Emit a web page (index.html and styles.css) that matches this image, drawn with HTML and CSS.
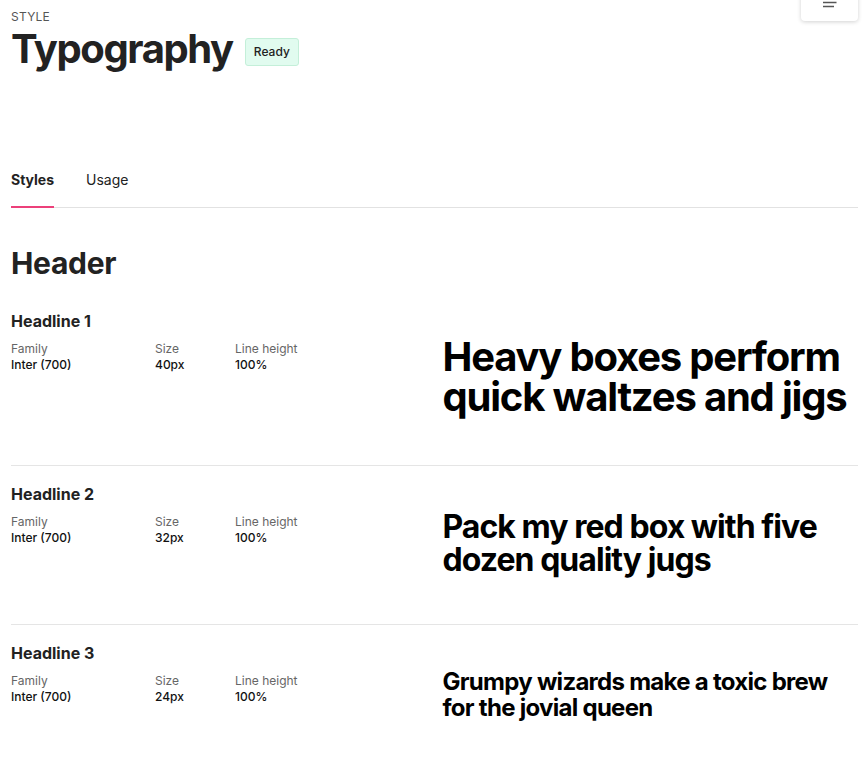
FILE: index.html
```html
<!DOCTYPE html>
<html lang="en">
<head>
  <meta charset="UTF-8">
  <meta name="viewport" content="width=device-width, initial-scale=1.0">
  <title>Typography</title>
  <link rel="stylesheet" href="styles.css">
</head>
<body>
  <div class="page">
    <!-- Floating toolbar, cut off at the top edge -->
    <button class="menu-btn" aria-label="Menu">
      <svg width="16" height="8" viewBox="0 0 16 8">
        <path d="M1 2.5h13.5M1 6.5h11" stroke="#555" stroke-width="1.6" fill="none"/>
      </svg>
    </button>

    <header class="doc-header">
      <div class="eyebrow">STYLE</div>
      <div class="title-row">
        <h1>Typography</h1>
        <span class="badge">Ready</span>
      </div>
    </header>

    <nav class="tabs">
      <a class="tab active">Styles</a>
      <a class="tab">Usage</a>
    </nav>

    <h2 class="section-title">Header</h2>

    <!-- Headline 1 -->
    <div class="type-row">
      <h3>Headline 1</h3>
      <div class="type-body">
        <div class="meta">
          <div class="meta-item">
            <span class="label">Family</span>
            <span class="value">Inter (700)</span>
          </div>
          <div class="meta-item">
            <span class="label">Size</span>
            <span class="value">40px</span>
          </div>
          <div class="meta-item">
            <span class="label">Line height</span>
            <span class="value">100%</span>
          </div>
        </div>
        <p class="sample h1">Heavy boxes perform quick waltzes and jigs</p>
      </div>
    </div>

    <!-- Headline 2 -->
    <div class="type-row">
      <h3>Headline 2</h3>
      <div class="type-body">
        <div class="meta">
          <div class="meta-item">
            <span class="label">Family</span>
            <span class="value">Inter (700)</span>
          </div>
          <div class="meta-item">
            <span class="label">Size</span>
            <span class="value">32px</span>
          </div>
          <div class="meta-item">
            <span class="label">Line height</span>
            <span class="value">100%</span>
          </div>
        </div>
        <p class="sample h2">Pack my red box with five dozen quality jugs</p>
      </div>
    </div>

    <!-- Headline 3 -->
    <div class="type-row">
      <h3>Headline 3</h3>
      <div class="type-body">
        <div class="meta">
          <div class="meta-item">
            <span class="label">Family</span>
            <span class="value">Inter (700)</span>
          </div>
          <div class="meta-item">
            <span class="label">Size</span>
            <span class="value">24px</span>
          </div>
          <div class="meta-item">
            <span class="label">Line height</span>
            <span class="value">100%</span>
          </div>
        </div>
        <p class="sample h3">Grumpy wizards make a toxic brew for the jovial queen</p>
      </div>
    </div>
  </div>
</body>
</html>
```

FILE: styles.css
```css
* {
  box-sizing: border-box;
}

body {
  margin: 0;
  font-family: Inter, 'Noto Sans', sans-serif;
  color: #222;
  background: #fff;
}

.page {
  position: relative;
  padding: 0 5px 0 11px;
}

.menu-btn {
  position: absolute;
  top: -12px;
  right: 5px;
  width: 57px;
  height: 33px;
  padding: 12px 0 0 0;
  background: #fff;
  border: none;
  border-radius: 4px;
  box-shadow: 0 1px 4px rgba(0, 0, 0, 0.18);
  display: flex;
  justify-content: center;
  align-items: flex-start;
}

.doc-header {
  padding-top: 10px;
}

.eyebrow {
  font-size: 12px;
  line-height: 14px;
  color: #555;
  letter-spacing: 0.02em;
}

.title-row {
  display: flex;
  align-items: center;
  gap: 12px;
  margin-top: 2px;
}

h1 {
  margin: 0;
  font-size: 40px;
  line-height: 46px;
  font-weight: 700;
  letter-spacing: -0.035em;
  color: #222;
}

.badge {
  display: inline-block;
  margin-top: 5px;
  padding: 6px 8px;
  font-size: 12px;
  line-height: 14px;
  font-weight: 500;
  color: #222;
  background: #e1fbef;
  border: 1px solid #c4efd9;
  border-radius: 3px;
}

.tabs {
  display: flex;
  gap: 32px;
  margin-top: 98px;
  border-bottom: 1px solid #e2e2e2;
}

.tab {
  font-size: 14px;
  line-height: 20px;
  padding-bottom: 16px;
  color: #222;
  border-bottom: 2px solid transparent;
  margin-bottom: -1px;
}

.tab.active {
  font-weight: 700;
  border-bottom-color: #ec407a;
}

.section-title {
  margin: 37px 0 12px;
  font-size: 30px;
  line-height: 36px;
  font-weight: 700;
  letter-spacing: -0.01em;
  color: #222;
}

.type-row {
  padding: 18px 0 48px;
  border-bottom: 1px solid #e5e5e5;
}

.type-row:last-child {
  border-bottom: none;
}

.type-row h3 {
  margin: 0 0 6px;
  font-size: 16px;
  line-height: 20px;
  font-weight: 700;
  color: #222;
}

.type-body {
  display: grid;
  grid-template-columns: 1fr 1fr;
  gap: 16px;
}

.meta {
  display: grid;
  grid-template-columns: 144px 80px auto;
  align-content: start;
  padding-top: 4px;
}

.meta-item {
  display: flex;
  flex-direction: column;
}

.label {
  font-size: 12px;
  line-height: 16px;
  color: #666;
}

.value {
  font-size: 12px;
  line-height: 16px;
  font-weight: 500;
  color: #111;
}

.sample {
  margin: 0;
  font-weight: 700;
  letter-spacing: -0.03em;
  color: #000;
}

.sample.h1 {
  font-size: 40px;
  line-height: 40px;
}

.sample.h2 {
  font-size: 32px;
  line-height: 33px;
}

.sample.h3 {
  font-size: 24px;
  line-height: 26px;
}
```
